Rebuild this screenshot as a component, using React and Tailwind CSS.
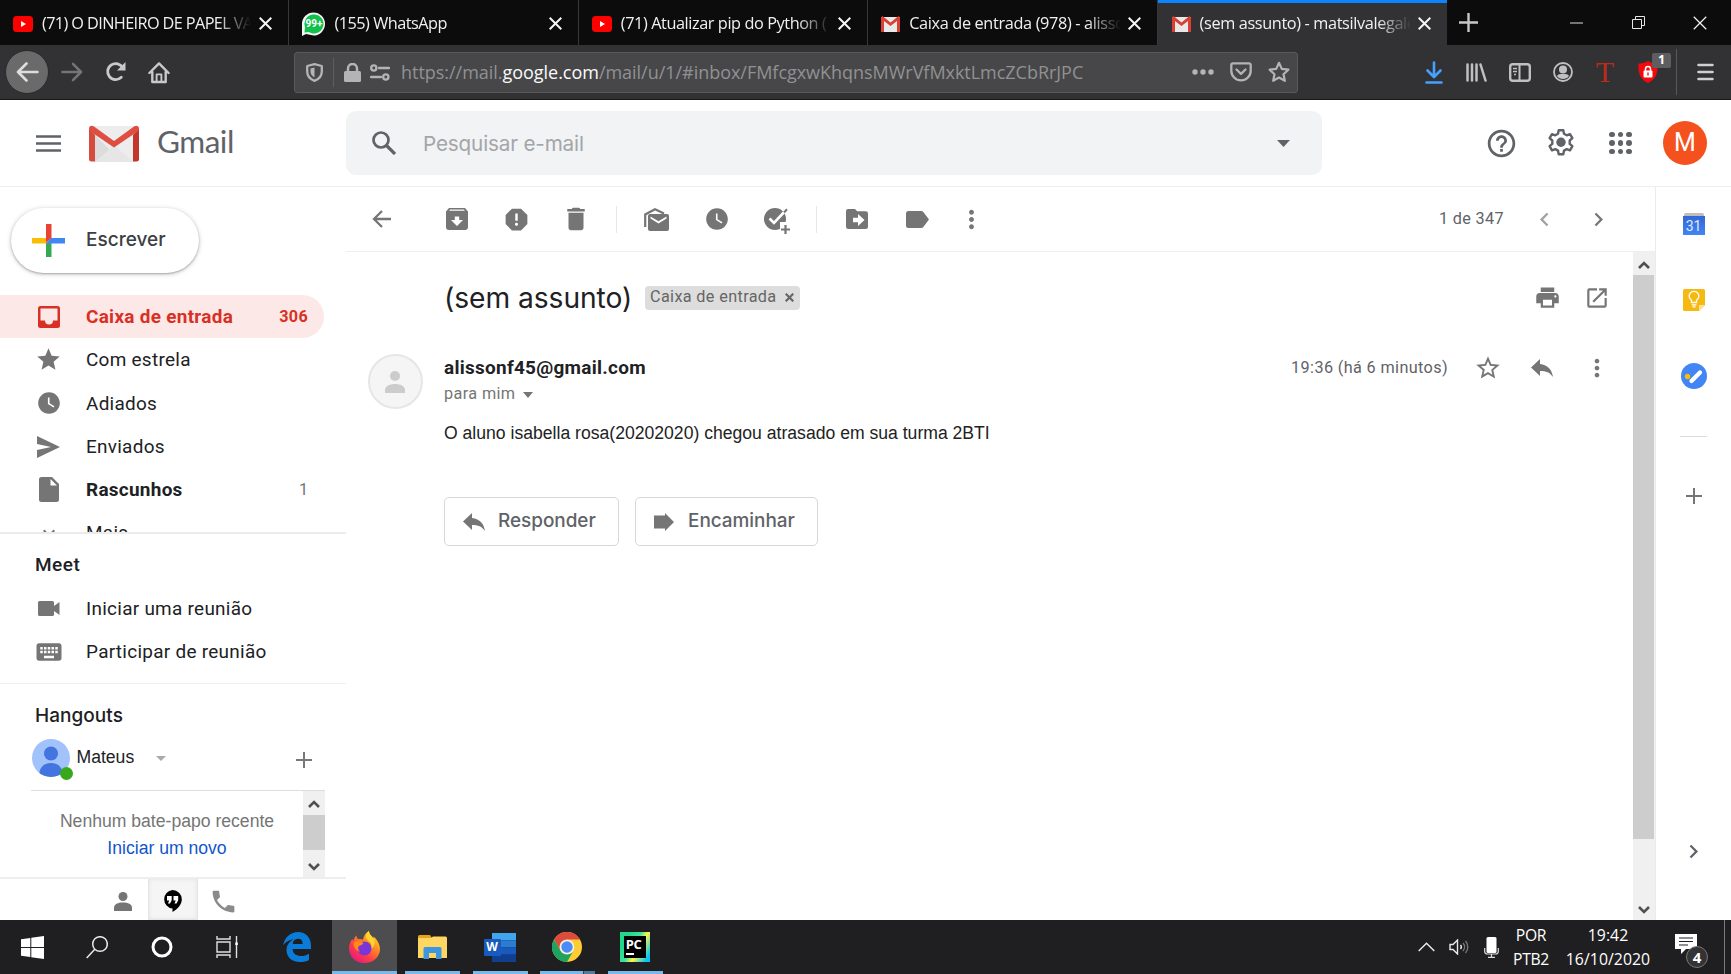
import React from "react";
import {
  MdSearch, MdHelpOutline, MdArrowBack, MdDelete, MdReport, MdMoreVert,
  MdWatchLater, MdChevronLeft, MdChevronRight, MdPrint, MdStarBorder, MdStar,
  MdKeyboard, MdPhone, MdOpenInNew, MdExpandMore,
} from "react-icons/md";

const SEGOE = "font-['Open_Sans','Noto_Sans',sans-serif]";
const GOOGLE = "font-['Inter','Roboto',sans-serif]";
const ROBOTO = "font-['Roboto',sans-serif]";
const ARIAL = "font-['Liberation_Sans',Arial,sans-serif]";

function Cell({ w, children, className = "" }) {
  return (
    <div className={`flex shrink-0 items-center justify-center ${className}`} style={{ width: w }}>
      {children}
    </div>
  );
}

/* ---------- brand marks ---------- */
const YouTube = () => (
  <svg width="20" height="16" viewBox="0 0 20 16"><rect width="20" height="16" rx="3.500" fill="#f00" /><path d="M8 5v6l5-3z" fill="#fff" /></svg>
);
const WhatsApp = () => (
  <span className="relative flex h-[24px] w-[23px] items-center justify-center">
    <svg className="absolute inset-0" width="23" height="24" viewBox="0 0 23 24">
      <path d="M0 24V12A11.500 11.500 0 1 1 11.500 23.500L4 22z" fill="#f4f4f4" />
      <path d="M2.500 20.500L3 15A9.500 9.500 0 1 1 7 20z" fill="#12c04c" />
    </svg>
    <span className="relative font-['Roboto',sans-serif] text-[10px] font-bold leading-none text-white">99+</span>
  </span>
);
const GmailSmall = () => (
  <svg width="19" height="16" viewBox="0 0 19 16">
    <path d="M0 1h19v15H0z" fill="#e9e9e9" />
    <path d="M0 1.500L1.500 0 9.500 6.500 17.500 0 19 1.500V16h-3V5L9.500 10 3 5v11H0z" fill="#d93f33" />
  </svg>
);
const GmailLogo = () => (
  <svg width="50" height="37" viewBox="0 0 50 37">
    <path d="M4 1h42v36H4z" fill="#ededed" />
    <path d="M6 10L33 37H6z" fill="#dcdcdc" />
    <path d="M6 37L25 20 44 37z" fill="#e6e6e6" />
    <path d="M0 3.500V34a2.500 2.500 0 0 0 2.500 2.500H6V10z" fill="#d54b3e" />
    <path d="M50 3.500V34a2.500 2.500 0 0 1-2.500 2.500H44V10z" fill="#c2372c" />
    <path d="M0 3.500C0 .8 3 0 5 1.600L25 16 45 1.600C47 0 50 .8 50 3.500c0 1.400-.6 2.300-1.800 3.200L25 22.500 1.800 6.700C.6 5.800 0 4.900 0 3.500z" fill="#de4f42" />
  </svg>
);

/* ---------- browser ---------- */
const Cross = ({ s = 13, w = 2 }) => (
  <svg width={s} height={s} viewBox="0 0 13 13" stroke="#f5f5f5" strokeWidth={w} fill="none"><path d="M.7.7l11.600 11.600M12.300.7L.7 12.300" /></svg>
);

function Tab({ icon, title, active, spacing, gap }) {
  return (
    <div className={`flex h-[45px] w-[289.4px] shrink-0 items-center border-[#38383a] pr-[16px] ${active ? "border-t-[3px] border-t-[#0a84ff] bg-[#323234] pl-[14px] pb-[1px]" : "border-r pl-[13px] pt-[2px]"}`}>
      {icon}
      <div className={`ml-[9px] flex-1 overflow-hidden whitespace-nowrap text-[16.300px] text-[#f0f0f0] [mask-image:linear-gradient(to_right,black_84%,transparent_100%)] ${gap} ${spacing}`}>{title}</div>
      <Cross />
    </div>
  );
}

function TabStrip() {
  return (
    <div className="flex h-[45px] bg-[#0c0c0c]">
      <Tab icon={<YouTube />} title="(71) O DINHEIRO DE PAPEL VA" spacing="tracking-[-0.620px]" gap="mr-[8px]" />
      <Tab icon={<WhatsApp />} title="(155) WhatsApp" spacing="tracking-[-0.500px]" gap="mr-[40px]" />
      <Tab icon={<YouTube />} title="(71) Atualizar pip do Python (" spacing="tracking-[-0.420px]" gap="mr-[7px]" />
      <Tab icon={<GmailSmall />} title="Caixa de entrada (978) - alisso" spacing="tracking-[-0.350px]" gap="mr-[7px]" />
      <Tab active icon={<GmailSmall />} title="(sem assunto) - matsilvalegale" spacing="tracking-[-0.370px]" gap="mr-[7px]" />
      <Cell w={43}><svg width="19" height="19" viewBox="0 0 19 19" stroke="#c8c8c8" strokeWidth="2.400"><path d="M9.500 0v19M0 9.500h19" /></svg></Cell>
      <div className="flex-1" />
      <Cell w={62}><svg width="13" height="2"><path d="M0 1h13" stroke="#ddd" /></svg></Cell>
      <Cell w={62}><svg width="13" height="13" viewBox="0 0 13 13" fill="none" stroke="#e6e6e6"><path d="M.5 3.500h9v9h-9zM3.500 3.500v-3h9v9h-3" /></svg></Cell>
      <Cell w={62}><Cross s={14} w={1.1} /></Cell>
    </div>
  );
}

function NavBar() {
  return (
    <div className="flex h-[55px] items-center border-b border-[#18181a] bg-[#323234] pl-[5px]">
      <Cell w={44}>
        <div className="flex h-[44px] w-[44px] items-center justify-center rounded-full border border-[#2a2a2c] bg-[#6a6a6a]">
          <svg width="23" height="20" viewBox="0 0 23 20" fill="none" stroke="#dedede" strokeWidth="2.600" strokeLinecap="round" strokeLinejoin="round"><path d="M21.500 10H2M10.500 1.500L2 10l8.500 8.500" /></svg>
        </div>
      </Cell>
      <Cell w={45}><svg width="22" height="20" viewBox="0 0 23 20" fill="none" stroke="#757577" strokeWidth="2.600" strokeLinecap="round" strokeLinejoin="round"><path d="M1.500 10H21M12.500 1.500L21 10l-8.500 8.500" /></svg></Cell>
      <Cell w={44}>
        <svg width="22" height="22" viewBox="0 0 22 22" fill="none" stroke="#c9c9ca" strokeWidth="2.800"><path d="M16.300 16.300A8 8 0 1 1 17.800 7" strokeLinecap="round" /><path d="M20.500 1v8.500H12z" fill="#c9c9ca" stroke="none" /></svg>
      </Cell>
      <Cell w={42}>
        <svg width="22" height="23" viewBox="0 0 23 23" fill="none" stroke="#c9c9ca" strokeWidth="2.500" strokeLinejoin="round" strokeLinecap="round"><path d="M1.500 12L11.500 2l10 10M4.500 11v10.500h14V11" /><path d="M9 21v-7.500h5V21" strokeWidth="2" /></svg>
      </Cell>
      <div className="ml-[114px] flex h-[41px] w-[1004px] items-center rounded-[3px] border border-[#59595b] bg-[#474749]">
        <Cell w={38}>
          <svg width="17" height="19" viewBox="0 0 17 19"><path d="M8.500 1.200L15.800 3v5.500c0 4.500-3 7.700-7.300 9.300-4.300-1.600-7.300-4.800-7.300-9.300V3z" fill="none" stroke="#b4b4b5" strokeWidth="2.300" strokeLinejoin="round" /><path d="M8.500 4.500v10C6 13 4.500 11.300 4.500 8.500v-3z" fill="#b4b4b5" /></svg>
        </Cell>
        <div className="h-[29px] w-px bg-[#5e5e60]" />
        <Cell w={37}>
          <svg width="17" height="19" viewBox="0 0 17 19"><rect y="8" width="17" height="11" rx="1.500" fill="#b4b4b5" /><path d="M4 9V5.500a4.500 4.500 0 0 1 9 0V9" fill="none" stroke="#b4b4b5" strokeWidth="2.500" /></svg>
        </Cell>
        <svg className="-ml-px" width="20" height="17" viewBox="0 0 20 17" fill="none" stroke="#b4b4b5" strokeWidth="2.300"><circle cx="3.800" cy="4" r="2.600" /><path d="M9 4h10M1 13h10" strokeLinecap="round" /><circle cx="15.800" cy="13" r="2.600" /></svg>
        <div className="ml-[11px] w-[720px] whitespace-nowrap text-[18px] tracking-[-0.030px] text-[#919193]">
          https://mail.<span className="text-[#fafafa]">google.com</span>/mail/u/1/#inbox/FMfcgxwKhqnsMWrVfMxktLmcZCbRrJPC
        </div>
        <div className="flex-1" />
        <Cell w={38}><svg width="22" height="6" fill="#b4b4b5"><circle cx="3" cy="3" r="2.700" /><circle cx="11" cy="3" r="2.700" /><circle cx="19" cy="3" r="2.700" /></svg></Cell>
        <Cell w={38}><svg width="22" height="20" viewBox="0 0 22 20" fill="none" stroke="#b4b4b5" strokeWidth="2.300" strokeLinecap="round" strokeLinejoin="round"><path d="M3 1.300h16a1.700 1.700 0 0 1 1.700 1.700v5.700a9.700 9.700 0 0 1-19.400 0V3A1.700 1.700 0 0 1 3 1.300z" /><path d="M6.500 7.500L11 11.800l4.500-4.300" /></svg></Cell>
        <Cell w={37}><svg width="22" height="22" viewBox="0 0 22 22" fill="none" stroke="#b4b4b5" strokeWidth="2.200" strokeLinejoin="round"><path d="M11 1.800l2.800 6.100 6.600.8-4.900 4.500 1.300 6.600L11 16.500l-5.800 3.300 1.300-6.600-4.900-4.500 6.600-.8z" /></svg></Cell>
      </div>
      <div className="flex-1" />
      <Cell w={43}><svg width="18" height="23" viewBox="0 0 18 23" fill="none" stroke="#45a1ff" strokeWidth="2.600" strokeLinecap="round" strokeLinejoin="round"><path d="M9 1.500v14M2.500 9.500L9 16l6.500-6.500M1.500 21.500h15" /></svg></Cell>
      <Cell w={43}><svg width="21" height="19" viewBox="0 0 21 19" stroke="#c0c0c1" strokeWidth="2.500" strokeLinecap="round"><path d="M1.500 1.500v16M6 1.500v16M10.500 1.500v16M14.500 1.500l5 16" /></svg></Cell>
      <Cell w={43}><svg width="22" height="19" viewBox="0 0 22 19" fill="none" stroke="#c0c0c1" strokeWidth="2.400"><rect x="1.200" y="1.200" width="19.600" height="16.600" rx="2.500" /><path d="M10.500 1v17" strokeWidth="2" /><path d="M4 5.500h4M4 8.500h4M5 11.500h2" strokeWidth="1.500" /></svg></Cell>
      <Cell w={43}><svg width="20" height="20" viewBox="0 0 20 20"><circle cx="10" cy="10" r="9" fill="none" stroke="#c0c0c1" strokeWidth="1.800" /><circle cx="10" cy="7.500" r="4" fill="#c0c0c1" /><path d="M4 14c1-2 3-2 6-2s5 0 6 2a7.500 7.500 0 0 1-12 0z" fill="#c0c0c1" /></svg></Cell>
      <Cell w={42}><span className="font-['Liberation_Serif',serif] text-[30px] leading-none text-[#b92c1a]">T</span></Cell>
      <div className="relative flex h-[46px] w-[50px] items-center pl-[12px]">
        <svg width="20" height="22" viewBox="0 0 20 22"><path d="M10 0c3 2 6 2.500 9.500 2.500C20 12 18 18.500 10 22 2 18.500 0 12 .5 2.500 4 2.500 7 2 10 0z" fill="#f5090c" /><rect x="5.500" y="9.500" width="9" height="7" rx="1" fill="#fff" /><path d="M7.500 10V8a2.500 2.500 0 0 1 5 0v2" fill="none" stroke="#fff" strokeWidth="1.500" /><path d="M10 11.500v3" stroke="#f5090c" strokeWidth="1.400" /></svg>
        <span className="absolute right-[5px] top-[4px] flex h-[15px] w-[19px] items-center justify-center rounded-[2px] bg-[#5e5e60] text-[12.500px] font-bold text-white">1</span>
      </div>
      <div className="h-[46px] w-px bg-[#59595b]" />
      <Cell w={54} className="pl-[3px]"><svg width="17" height="18" viewBox="0 0 17 18" stroke="#d0d0d1" strokeWidth="2.500" strokeLinecap="round"><path d="M1.500 2h14M1.500 9h14M1.500 16h14" /></svg></Cell>
    </div>
  );
}

/* ---------- mail header ---------- */
function Gear() {
  return (
    <svg width="28" height="28" viewBox="0 0 28 28" fill="none" stroke="#5f6368" strokeWidth="2.400" strokeLinejoin="round">
      <path d="M11.700 1.300h4.600l.7 3.500 2.700 1.500 3.300-1.200 2.400 4.100-2.700 2.300v3.400l2.700 2.300-2.400 4.100-3.300-1.200-2.700 1.500-.7 3.600h-4.600l-.7-3.600-2.700-1.500L5 21.300l-2.400-4.100 2.700-2.300v-3.400L2.600 9.200 5 5.100l3.300 1.200L11 4.800z" />
      <circle cx="14" cy="13.200" r="4.700" fill="#5f6368" stroke="none" />
    </svg>
  );
}

function MailHeader() {
  return (
    <header className="flex h-[87px] shrink-0 items-center border-b border-[#eceeef]">
      <div className="flex w-[346px] items-center pl-[36px]">
        <svg width="25" height="17" viewBox="0 0 25 17" stroke="#5f6368" strokeWidth="2.700"><path d="M0 1.500h25M0 8.500h25M0 15.500h25" /></svg>
        <div className="ml-[28px] pt-px"><GmailLogo /></div>
        <div className="ml-[18px] pb-[3px] font-['Lato',sans-serif] text-[31.500px] leading-none tracking-[-0.500px] text-[#5f6368]">Gmail</div>
      </div>
      <div className="flex h-[64px] w-[976px] items-center rounded-[10px] bg-[#f1f3f4] pl-[26px] pr-[19px]">
        <svg width="24" height="24" viewBox="0 0 24 24" fill="none" stroke="#5f6368" strokeWidth="2.700"><circle cx="9" cy="9" r="7.500" /><path d="M14.500 14.500l8.500 8.500" strokeWidth="3.200" /></svg>
        <div className={`ml-[27px] flex-1 pt-[2px] text-[20.700px] tracking-[-0.170px] text-[#a3a6a9] ${GOOGLE}`}>Pesquisar e-mail</div>
        <svg className="mr-[13px]" width="13" height="7"><path d="M0 0h13L6.500 7z" fill="#5f6368" /></svg>
      </div>
      <div className="flex-1" />
      <Cell w={59}><MdHelpOutline size={33} color="#5f6368" /></Cell>
      <Cell w={60}><Gear /></Cell>
      <Cell w={59}>
        <div className="grid grid-cols-3 gap-[3px]">
          {Array.from({ length: 9 }, (_, i) => <span key={i} className="h-[5.400px] w-[5.400px] rounded-full bg-[#5f6368]" />)}
        </div>
      </Cell>
      <Cell w={81} className="pr-[11px]"><div className={`flex h-[44px] w-[44px] items-center justify-center rounded-full bg-[#f4511e] text-[25px] text-white ${ROBOTO}`}>M</div></Cell>
    </header>
  );
}

/* ---------- sidebar ---------- */
const G = "#757575";
function NavRow({ icon, label, count, tone = "text-[#202124]", track = "tracking-[0.280px]", className = "" }) {
  return (
    <div className={`flex h-[43.300px] shrink-0 items-center pl-[27px] ${ROBOTO} ${className}`}>
      <Cell w={43}>{icon}</Cell>
      <span className={`ml-[16px] flex-1 pt-px text-[18.950px] ${tone} ${track}`}>{label}</span>
      {count}
    </div>
  );
}

function ScrollChevron({ down }) {
  return <svg width="12" height="8" viewBox="0 0 12 8" fill="none" stroke="#505050" strokeWidth="2.600">{down ? <path d="M1 1l5 5 5-5" /> : <path d="M1 7l5-5 5 5" />}</svg>;
}

function Sidebar() {
  return (
    <aside className="flex w-[346px] shrink-0 flex-col overflow-hidden">
      <div className="h-[345px] shrink-0 overflow-hidden pt-[21px]">
        <div className="ml-[11px] flex h-[65px] w-[188px] items-center rounded-full bg-white pl-[21px] shadow-[0_1px_2px_0_rgba(60,64,67,0.350),0_1px_4px_1px_rgba(60,64,67,0.180)]">
          <svg width="33" height="33" viewBox="0 0 33 33"><path d="M14 0h5.500v14L14 19z" fill="#ea4335" /><path d="M0 14h14v5.500H0z" fill="#fbbc05" /><path d="M14 19h5.500v14H14z" fill="#34a853" /><path d="M19 14h14v5.500H14z" fill="#4285f4" /></svg>
          <span className={`ml-[21px] text-[19px] font-medium text-[#3c4043] ${GOOGLE}`}>Escrever</span>
        </div>
        <div className="mt-[22px] flex flex-col">
          <NavRow
            className="mr-[22px] rounded-r-full bg-[#fce8e6] pr-[16px]"
            icon={<svg width="22" height="22" viewBox="0 0 22 22"><path fillRule="evenodd" fill="#d93025" d="M2.500 0h17A2.500 2.500 0 0 1 22 2.500v17a2.500 2.500 0 0 1-2.500 2.500h-17A2.500 2.500 0 0 1 0 19.500v-17A2.500 2.500 0 0 1 2.500 0zM2.500 2.500v12H7a4 4 0 0 0 8 0h4.500v-12z" /></svg>}
            label="Caixa de entrada" tone="font-bold text-[#d93025]" track="tracking-[0.290px]"
            count={<span className="text-[16.200px] font-bold tracking-[0.300px] text-[#d93025]">306</span>}
          />
          <NavRow icon={<MdStar size={27} color={G} />} label="Com estrela" />
          <NavRow icon={<MdWatchLater size={26} color={G} />} label="Adiados" />
          <NavRow icon={<svg width="23" height="22" viewBox="0 0 23 22"><path d="M0 0l23 11L0 22v-8l14-3L0 8z" fill={G} /></svg>} label="Enviados" />
          <NavRow className="pr-[38px]" icon={<svg width="20" height="25" viewBox="0 0 20 25"><path fillRule="evenodd" d="M2.500 0H13l7 7v15.500a2.500 2.500 0 0 1-2.500 2.500h-15A2.500 2.500 0 0 1 0 22.500v-20A2.500 2.500 0 0 1 2.500 0zM11.500 2v6.500H18z" fill={G} /></svg>} label="Rascunhos" tone="font-bold text-[#202124]"
            count={<span className="text-[16.200px] text-[#757575]">1</span>} />
          <NavRow icon={<MdExpandMore size={24} color={G} />} label="Mais" />
        </div>
      </div>
      <div className="h-[152px] shrink-0 border-b border-t-2 border-b-[#eee] border-t-[#ebebeb]">
        <div className={`pl-[35px] pt-[17px] text-[19px] font-medium leading-[28px] tracking-[0.500px] text-[#202124] ${ROBOTO}`}>Meet</div>
        <div className="mt-[8px]">
          <NavRow icon={<svg width="22" height="15" viewBox="0 0 22 15"><path d="M1.500 0h13A1.500 1.500 0 0 1 16 1.500V5l5.500-4v13L16 10v3.500a1.500 1.500 0 0 1-1.500 1.500h-13A1.500 1.500 0 0 1 0 13.500v-12A1.500 1.500 0 0 1 1.500 0z" fill={G} /></svg>} label="Iniciar uma reunião" />
          <NavRow icon={<MdKeyboard size={30} color={G} />} label="Participar de reunião" />
        </div>
      </div>
      <div className={`pl-[35px] pt-[18px] text-[19px] font-medium leading-[28px] tracking-[0.050px] text-[#202124] ${GOOGLE}`}>Hangouts</div>
      <div className={`flex h-[60px] items-center pb-[5px] pl-[31.500px] text-[17.600px] text-[#202124] ${ARIAL}`}>
        <div className="relative h-[38px] w-[38px]">
          <svg width="38" height="38" viewBox="0 0 38 38"><clipPath id="face"><circle cx="19" cy="19" r="19" /></clipPath><g clipPath="url(#face)"><rect width="38" height="38" fill="#a1c2fa" /><circle cx="19" cy="14.500" r="7" fill="#4374e0" /><path d="M7 38c0-9 4-14 12-14s12 5 12 14z" fill="#4374e0" /></g></svg>
          <span className="absolute left-[28px] top-[28px] h-[13px] w-[13px] rounded-full bg-[#38a91c]" />
        </div>
        <span className="ml-[7px] w-[73px]">Mateus</span>
        <svg className="ml-[6.500px] mt-px" width="10" height="5"><path d="M0 0h10L5 5z" fill="#aaa" /></svg>
        <svg className="ml-[130px] mt-[4px]" width="16" height="16" stroke="#777" strokeWidth="2"><path d="M8 0v16M0 8h16" /></svg>
      </div>
      <div className={`ml-[31px] flex h-[87px] w-[294px] shrink-0 border-t border-[#ddd] text-[17.600px] ${ARIAL}`}>
        <div className="flex flex-1 flex-col items-center pt-[17px] leading-[27px]">
          <span className="whitespace-nowrap text-[#757575]">Nenhum bate-papo recente</span>
          <span className="text-[#1155cc]">Iniciar um novo</span>
        </div>
        <div className="flex w-[22px] flex-col items-center justify-between bg-[#f0f0f0]">
          <div className="flex h-[23px] items-center pt-[2px]"><ScrollChevron /></div>
          <div className="h-[35px] w-full bg-[#cdcdcd]" />
          <div className="flex h-[27px] items-center pt-[6px]"><ScrollChevron down /></div>
        </div>
      </div>
      <div className="flex h-[43px] shrink-0 border-t-2 border-[#eee] pl-[98px]">
        <Cell w={50} className="pt-[4px]"><svg width="18" height="19" viewBox="0 0 18 19" fill={G}><circle cx="9" cy="4.500" r="4.500" /><path d="M0 19v-3c0-4 4-5.500 9-5.500s9 1.500 9 5.500v3z" /></svg></Cell>
        <Cell w={50} className="border border-t-0 border-[#e5e5e5] bg-[#f5f5f5] pr-[2px] pt-[4px] shadow-[inset_0_0_4px_rgba(0,0,0,0.080)]">
          <svg width="19" height="22" viewBox="0 0 19 22"><path d="M9.500 0a9.300 9.300 0 0 1 9.300 9.300c0 5.200-4 9.700-9.300 12.700v-3.500A9.300 9.300 0 0 1 9.500 0z" /><path d="M4 6h4.700v4.200L7 13.500H5L6.200 10.500H4zM10.500 6h4.700v4.200l-1.700 3.300h-2l1.200-3h-2.200z" fill="#fff" /></svg>
        </Cell>
        <Cell w={50} className="pt-[4px]"><MdPhone size={29} color="#8b8b8b" /></Cell>
      </div>
    </aside>
  );
}

/* ---------- message ---------- */
const Archive = () => (
  <svg width="22" height="22" viewBox="0 0 22 22"><path fillRule="evenodd" fill={G} d="M3 0h16l3 3.500V19a3 3 0 0 1-3 3H3a3 3 0 0 1-3-3V3.500zM3.200 2.800h15.600L18 1.500H4zM8.800 8.500V12H5l6 6 6-6h-3.800V8.500z" /></svg>
);
const MailRead = () => (
  <svg width="25" height="23" viewBox="0 0 25 23"><path d="M1.200 19V6.500L11 1.300l9 4.200" fill="none" stroke={G} strokeWidth="2.200" /><path fillRule="evenodd" fill={G} d="M6 6h17a2 2 0 0 1 2 2v13a2 2 0 0 1-2 2H6a2 2 0 0 1-2-2V8a2 2 0 0 1 2-2zM6.500 8.500v2l8 5 8-5v-2l-8 4.800z" /></svg>
);
const AddTask = () => (
  <svg width="26" height="26" viewBox="0 0 26 26"><circle cx="11" cy="11" r="11" fill={G} /><path d="M5.500 10.500l4.500 4.500L23 1" fill="none" stroke="#fff" strokeWidth="2.600" /><path d="M20 4.500L23 1.300" stroke={G} strokeWidth="2" /><path d="M16 14h10v12H16z" fill="#fff" /><path d="M21.500 17v9M17 21.500h9" stroke={G} strokeWidth="2.200" /></svg>
);
const MoveTo = () => (
  <svg width="22" height="20" viewBox="0 0 22 20"><path fillRule="evenodd" fill={G} d="M2.200 0H9l2.200 2.200h8.600A2.200 2.200 0 0 1 22 4.400v13.400a2.200 2.200 0 0 1-2.200 2.200H2.200A2.200 2.200 0 0 1 0 17.800V2.200A2.200 2.200 0 0 1 2.200 0zM7 8.800v4.400h5V17l6.500-6L12 5v3.800z" /></svg>
);

function Toolbar() {
  const divider = <Cell w={20}><span className="h-[27px] w-px bg-[#e8e8e8]" /></Cell>;
  return (
    <div className="flex h-[65px] shrink-0 items-center border-b border-[#eceff1] pl-[5px]">
      <Cell w={60}><svg width="19" height="18" viewBox="0 0 19 18" fill="none" stroke={G} strokeWidth="2.300"><path d="M19 9H2M10 1L2 9l8 8" /></svg></Cell>
      <div className="w-[16px]" />
      <Cell w={60}><Archive /></Cell>
      <Cell w={59}><MdReport size={29} color={G} /></Cell>
      <Cell w={60}><MdDelete size={30} color={G} /></Cell>
      {divider}
      <Cell w={61}><MailRead /></Cell>
      <Cell w={60}><MdWatchLater size={26} color={G} /></Cell>
      <Cell w={59} className="pt-[4px]"><AddTask /></Cell>
      {divider}
      <Cell w={61}><MoveTo /></Cell>
      <Cell w={60}><svg width="23" height="17" viewBox="0 0 23 17"><path d="M2.500 0H15a3 3 0 0 1 2.500 1.200L23 8.500l-5.500 7.300A3 3 0 0 1 15 17H2.500A2.500 2.500 0 0 1 0 14.500v-12A2.500 2.500 0 0 1 2.500 0z" fill={G} /></svg></Cell>
      <Cell w={49}><MdMoreVert size={29} color={G} /></Cell>
      <div className="flex-1" />
      <span className={`mr-[13px] pt-px text-[16.240px] tracking-[0.330px] text-[#5f6368] ${ROBOTO}`}>1 de 347</span>
      <Cell w={54}><MdChevronLeft size={27} color="#a0a0a0" /></Cell>
      <Cell w={54}><MdChevronRight size={27} color={G} /></Cell>
      <div className="w-[30px]" />
    </div>
  );
}

function ReplyButton({ icon, label, w }) {
  return (
    <button className={`flex h-[49px] items-center rounded-[5px] border border-[#d5d7db] pl-[18px] text-[18.950px] font-medium tracking-[-0.030px] text-[#5f6368] ${GOOGLE}`} style={{ width: w }}>
      {icon}<span className="ml-[13px]">{label}</span>
    </button>
  );
}

function Message() {
  return (
    <section className="min-w-0 flex-1">
      <div className="flex h-[93px] items-center pb-[2px] pl-[98px]">
        <h1 className={`w-[201px] whitespace-nowrap pt-px text-[28.200px] tracking-[-0.050px] text-[#202124] ${GOOGLE}`}>(sem assunto)</h1>
        <div className={`flex h-[24px] w-[155px] items-center rounded-[4px] bg-[#ddd] pl-[5px] text-[16.240px] tracking-[0.350px] text-[#666] ${ROBOTO}`}>
          <span className="w-[135px] whitespace-nowrap">Caixa de entrada</span>
          <svg width="9" height="9" viewBox="0 0 9 9" stroke="#666" strokeWidth="2.200"><path d="M.7.7l7.600 7.600M8.300.7L.7 8.300" /></svg>
        </div>
        <div className="flex-1" />
        <Cell w={49}><MdPrint size={27} color={G} /></Cell>
        <Cell w={49}><MdOpenInNew size={26} color={G} /></Cell>
        <div className="w-[12px]" />
      </div>
      <div className={`flex ${ROBOTO}`}>
        <div className="mt-[9px] flex w-[98px] justify-center">
          <div className="flex h-[55px] w-[55px] items-center justify-center rounded-full border-2 border-[#e6e6e6] bg-[#f5f5f5]">
            <svg width="20" height="22" viewBox="0 0 20 22" fill="#ccc"><circle cx="10" cy="5" r="5" /><path d="M0 22v-3c0-4 5-6 10-6s10 2 10 6v3z" /></svg>
          </div>
        </div>
        <div className="flex-1">
          <div className="flex h-[45px] items-center">
            <span className="pt-[2px] text-[18.950px] font-bold tracking-[0.280px] text-[#202124]">alissonf45@gmail.com</span>
            <div className="flex-1" />
            <span className="mr-[13px] pt-px text-[16.240px] tracking-[0.370px] text-[#5f6368]">19:36 (há 6 minutos)</span>
            <Cell w={54}><MdStarBorder size={28} color={G} /></Cell>
            <Cell w={54}><svg width="22" height="18" viewBox="0 0 22 18"><path d="M9 5V0L0 8.500 9 17v-5c6 0 10 1.500 13 6C21 11 17 6 9 5z" fill={G} /></svg></Cell>
            <Cell w={55}><MdMoreVert size={28} color={G} /></Cell>
            <div className="w-[9px]" />
          </div>
          <div className="-mt-[7px] flex h-[24px] items-center pb-[1px] text-[16.240px] tracking-[0.380px] text-[#757575]">
            <span>para mim</span>
            <svg className="ml-[8px]" width="10" height="6"><path d="M0 0h10L5 6z" fill={G} /></svg>
          </div>
          <p className={`mt-[14px] text-[17.600px] leading-[24px] text-[#222] ${ARIAL}`}>O aluno isabella rosa(20202020) chegou atrasado em sua turma 2BTI</p>
          <div className="mt-[52px] flex gap-[16px]">
            <ReplyButton w={175} label="Responder" icon={<svg width="22" height="18" viewBox="0 0 22 18"><path d="M9 5V0L0 8.500 9 17v-5c6 0 10 1.500 13 6C21 11 17 6 9 5z" fill={G} /></svg>} />
            <ReplyButton w={183} label="Encaminhar" icon={<svg width="21" height="18" viewBox="0 0 21 18"><path d="M0 2.500h11V0l9 9-9 9v-2.500H0z" fill={G} /></svg>} />
          </div>
        </div>
      </div>
    </section>
  );
}

function MainPane() {
  return (
    <main className="flex min-w-0 flex-1 flex-col">
      <Toolbar />
      <div className="flex min-h-0 flex-1">
        <Message />
        <div className="flex w-[22px] flex-col items-center bg-[#f0f0f0]">
          <div className="flex h-[23px] items-center pt-[2px]"><ScrollChevron /></div>
          <div className="mr-px h-[564px] w-[21px] bg-[#cdcdcd]" />
          <div className="flex-1" />
          <div className="flex h-[22px] items-center pb-[1px] pt-[3px]"><ScrollChevron down /></div>
        </div>
      </div>
    </main>
  );
}

function SidePanel() {
  return (
    <aside className="flex w-[76px] shrink-0 flex-col items-center border-l border-[#e8ecef]">
      <div className="mt-[26px] flex h-[22px] w-[22px] flex-col">
        <div className="mx-auto h-[3px] w-[20px] rounded-t-[2px] bg-[#bdbdbd]" />
        <div className={`flex flex-1 items-center justify-center bg-gradient-to-b from-[#3367d6] to-[#4285f4] text-[14px] leading-none text-[#e0e9fb] ${ROBOTO}`}>31</div>
      </div>
      <svg className="mt-[54px]" width="22" height="22" viewBox="0 0 22 22"><path d="M1.500 0h19A1.500 1.500 0 0 1 22 1.500V16l-6 6H1.500A1.500 1.500 0 0 1 0 20.500v-19A1.500 1.500 0 0 1 1.500 0z" fill="#f5b912" /><path d="M22 16l-6 6v-6z" fill="#fde293" /><path d="M8.500 13.500v-2.300a4.800 4.800 0 1 1 5 0v2.300zM8.700 15.800h4.600M9.500 17.800h3" fill="none" stroke="#fff" strokeWidth="1.300" /></svg>
      <svg className="mt-[52px]" width="26" height="26" viewBox="0 0 26 26"><circle cx="13" cy="13" r="13" fill="#4285f4" /><circle cx="6.500" cy="13.500" r="2.700" fill="#fbbc04" /><path d="M10.500 18L19 9.500" stroke="#fff" strokeWidth="4.200" strokeLinecap="round" /></svg>
      <div className="mt-[47px] h-px w-[27px] bg-[#dadce0]" />
      <svg className="mt-[51px]" width="16" height="16" stroke="#757575" strokeWidth="2"><path d="M8 0v16M0 8h16" /></svg>
      <div className="flex-1" />
      <MdChevronRight className="mb-[55px]" size={27} color="#5f6368" />
    </aside>
  );
}

/* ---------- taskbar ---------- */
const Windows = () => <svg width="23" height="23" viewBox="0 0 23 23" fill="#fff"><path d="M0 3.300l9.300-1.300v9H0zM10.300 1.800L23 0v11H10.300zM0 12h9.300v9L0 19.700zM10.300 12H23v11l-12.700-1.800z" /></svg>;
const Edge = () => <svg width="28" height="30" viewBox="0 0 28 30"><path fill="#0a7bd8" fillRule="evenodd" d="M0 13C2 5 8 0 15 0c8 0 13 6 13 13.500V17H9.500c.3 5 4.500 7 8.500 7 3 0 5.500-.8 8-2.300v6.200C23.500 29.300 20.500 30 17 30 8.500 30 3.500 25 3.500 18c0-5 3-8.800 7.500-10.800C7 7.500 3 9.500 0 13zM9.700 12h10c0-3.500-1.700-5.300-4.700-5.300S10 8.800 9.700 12z" /></svg>;
const Firefox = () => (
  <svg width="31" height="32" viewBox="0 0 31 32">
    <defs><linearGradient id="ff" x1="1" y1="0" x2=".2" y2="1"><stop offset="0" stopColor="#fff44f" /><stop offset=".35" stopColor="#ff9a1f" /><stop offset=".7" stopColor="#ff3b47" /><stop offset="1" stopColor="#e31587" /></linearGradient></defs>
    <path d="M20 0c0 3 2 4.500 3.500 6.500 1 1.200 1 .5 1-1 4 3.500 6.500 8 6.500 12.500C31 26 24 32 15.500 32S0 26 0 17.500c0-4 1.500-7.500 3.500-9.500.2 1 .4 1.600.8 2C5 7.500 6 5.500 7.500 4.500 7.500 6 8 7 9 8c2-.3 3.500 0 5 .7C14.500 5 17 1.500 20 0z" fill="url(#ff)" />
    <circle cx="15.500" cy="17.500" r="7" fill="#7a35d8" />
    <path d="M4.500 12c3-2.500 8-2 10 .5-1.500 2-4 1.500-5 3-1 2 0 4 1.500 5-4-.5-6.500-4-6.500-8.500z" fill="#ff8a16" />
    <path d="M20 0c-3 2-3.500 5-2.500 8 3 2 6 5 5 9.500 3-2 4-6 2.500-9.500C23 5 20 3.500 20 0z" fill="#ffd52e" />
  </svg>
);
const Explorer = () => <svg width="29" height="24" viewBox="0 0 29 24"><path d="M0 1.500A1.500 1.500 0 0 1 1.500 0H12l2 3H0z" fill="#e8a317" /><path d="M0 3h13l2-1.500h12.500A1.500 1.500 0 0 1 29 3v20H0z" fill="#fdd663" /><path d="M5.500 24V13.500A1.500 1.500 0 0 1 7 12h15a1.500 1.500 0 0 1 1.500 1.500V24H18v-6h-7v6z" fill="#3c97e0" /></svg>;
const Word = () => (
  <div className="relative h-[29px] w-[32px]">
    <svg width="32" height="29" viewBox="0 0 32 29"><path d="M8 0h24v7.300H8z" fill="#41a5ee" /><path d="M8 7.300h24v7.200H8z" fill="#2b7cd3" /><path d="M8 14.500h24v7.200H8z" fill="#185abd" /><path d="M8 21.700h24V29H8z" fill="#103f91" /></svg>
    <span className="absolute left-0 top-[6px] flex h-[17px] w-[17px] items-center justify-center rounded-[1px] bg-[#185abd] text-[12px] font-bold text-white">W</span>
  </div>
);
const Chrome = () => (
  <svg width="30" height="30" viewBox="0 0 30 30"><circle cx="15" cy="15" r="15" fill="#fc3" /><path d="M2 7.500A15 15 0 0 1 28 7.500H15A7.500 7.500 0 0 0 8.500 18.700z" fill="#dd4b3e" /><path d="M2 7.500A15 15 0 0 0 15 30l6.500-11.300A7.500 7.500 0 0 1 8.500 18.700z" fill="#1da462" /><circle cx="15" cy="15" r="7.300" fill="#f1f1f1" /><circle cx="15" cy="15" r="5.700" fill="#4c8bf5" /></svg>
);
const PyCharm = () => (
  <div className="flex h-[30px] w-[30px] items-center justify-center bg-[linear-gradient(120deg,#21d789_20%,#3ee0a0_45%,#fcf84a_60%,#07c3f2_90%)]">
    <div className="h-[22px] w-[22px] bg-black pl-[2px] pt-[1px] font-['Open_Sans',sans-serif] text-[13px] font-bold leading-[14px] tracking-[-0.500px] text-white">
      PC<div className="mt-[2px] h-[1.500px] w-[8px] bg-white" />
    </div>
  </div>
);

function TaskButton({ children, w = 55, mr = 12.6, active, grouped }) {
  return (
    <div className={`flex h-full shrink-0 flex-col ${active ? "bg-[#4d4d50]" : ""}`} style={{ width: w, marginRight: mr }}>
      <div className="flex flex-1 items-center justify-center pr-px pt-[3px]">{children}</div>
      <div className="flex h-[3px] justify-end bg-[#76b9ed]">{grouped && <span className="w-[12px] border-l border-[#2f4658] bg-[#4f7ba0]" />}</div>
    </div>
  );
}

function Taskbar() {
  return (
    <footer className="flex h-[54px] shrink-0 items-center bg-[#1f1f21] text-[16px] text-white">
      <Cell w={65}><Windows /></Cell>
      <Cell w={64}><svg width="22" height="23" viewBox="0 0 22 23" fill="none" stroke="#e8e8e8" strokeWidth="1.500"><circle cx="14" cy="8" r="7.300" /><path d="M8.800 13.200L.7 22" /></svg></Cell>
      <Cell w={65}><svg width="22" height="22"><circle cx="11" cy="11" r="9" fill="none" stroke="#fff" strokeWidth="3" /></svg></Cell>
      <Cell w={66}><svg width="22" height="22" viewBox="0 0 22 22" fill="none" stroke="#e0e0e0" strokeWidth="1.400"><path d="M1 0v3h13V0M1 6h13v10H1zM1 22v-3h13v3M20.500 0v22" /><rect x="19.300" y="6.500" width="2.500" height="2.500" fill="#fff" stroke="none" /></svg></Cell>
      <Cell w={72} className="pl-px"><Edge /></Cell>
      <TaskButton active w={65} mr={8}><Firefox /></TaskButton>
      <TaskButton><Explorer /></TaskButton>
      <TaskButton><Word /></TaskButton>
      <TaskButton grouped><Chrome /></TaskButton>
      <TaskButton><PyCharm /></TaskButton>
      <div className="flex-1" />
      <Cell w={36}><svg width="17" height="10" fill="none" stroke="#e8e8e8" strokeWidth="1.500"><path d="M.7 9L8.500 1.200 16.300 9" /></svg></Cell>
      <Cell w={30}><svg width="21" height="16" viewBox="0 0 21 16" fill="none" stroke="#e8e8e8" strokeWidth="1.400"><path d="M1 5.500h3L8.500 1v14L4 10.500H1z" /><path d="M11.500 6a3 3 0 0 1 0 4" /><path d="M14 4a6 6 0 0 1 0 8M16.500 2a9 9 0 0 1 0 12" stroke="#777" /></svg></Cell>
      <Cell w={34}><svg width="15" height="21" viewBox="0 0 15 21"><rect x="2.500" width="10" height="16" rx="1.500" fill="#fff" /><path d="M.7 11v3.500A2.500 2.500 0 0 0 3.200 17h8.600a2.500 2.500 0 0 0 2.500-2.500V11M7.500 17v3.300M4 20.300h7" fill="none" stroke="#ddd" strokeWidth="1.200" /></svg></Cell>
      <div className="flex w-[46px] flex-col items-center text-[15.700px] leading-[24px] tracking-[-0.300px]"><span>POR</span><span>PTB2</span></div>
      <div className="ml-[5px] flex w-[98px] flex-col items-center text-[15.800px] leading-[24px] tracking-[0.060px]"><span>19:42</span><span>16/10/2020</span></div>
      <div className="relative ml-[18px] h-[36px] w-[34px]">
        <svg className="mt-[5px]" width="22" height="20" viewBox="0 0 22 20"><path d="M0 0h22v15H11l-5 5v-5H0z" fill="#fff" /><path d="M4 4h14M4 7.500h14M4 11h9" stroke="#1f1f21" strokeWidth="1.200" /></svg>
        <span className="absolute left-[11px] top-[17px] flex h-[22px] w-[22px] items-center justify-center rounded-full border border-[#777] bg-[#333336] text-[15px] font-bold leading-none">4</span>
      </div>
      <div className="ml-[15px] mr-[6px] h-full w-px bg-[#7a7a7c]" />
    </footer>
  );
}

export default function App() {
  return (
    <div className={`flex h-[974px] w-[1731px] flex-col overflow-hidden bg-white ${SEGOE}`}>
      <TabStrip />
      <NavBar />
      <MailHeader />
      <div className="flex min-h-0 flex-1">
        <Sidebar />
        <MainPane />
        <SidePanel />
      </div>
      <Taskbar />
    </div>
  );
}
